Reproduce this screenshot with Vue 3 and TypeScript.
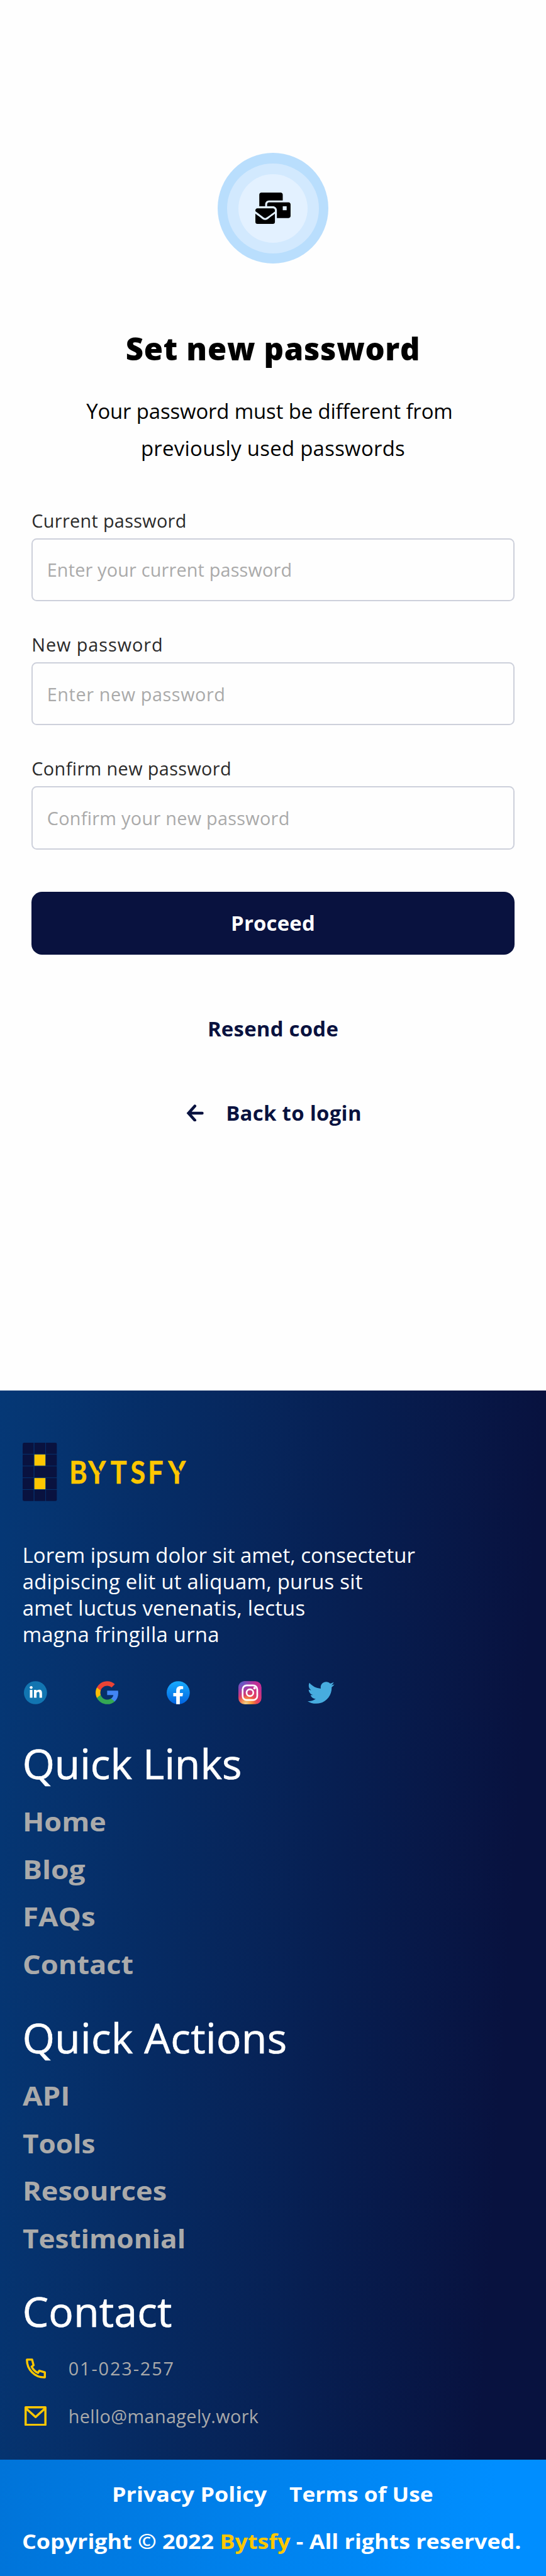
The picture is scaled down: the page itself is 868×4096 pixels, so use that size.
<script setup lang="ts">
interface Field {
  id: string
  label: string
  placeholder: string
  labelTracking: number
  hintTracking: number
}

interface FooterLink {
  text: string
  stretch: number
}

interface LinkGroup {
  title: string
  tracking: number
  links: FooterLink[]
}

const fields: Field[] = [
  { id: 'current', label: 'Current password', placeholder: 'Enter your current password', labelTracking: 0.33, hintTracking: 0.18 },
  { id: 'new', label: 'New password', placeholder: 'Enter new password', labelTracking: 0.95, hintTracking: 0.6 },
  { id: 'confirm', label: 'Confirm new password', placeholder: 'Confirm your new password', labelTracking: 0.4, hintTracking: 0.3 },
]

const groups: LinkGroup[] = [
  {
    title: 'Quick Links',
    tracking: 0.04,
    links: [
      { text: 'Home', stretch: 1.1 },
      { text: 'Blog', stretch: 1.13 },
      { text: 'FAQs', stretch: 1.12 },
      { text: 'Contact', stretch: 1.107 },
    ],
  },
  {
    title: 'Quick Actions',
    tracking: 0.4,
    links: [
      { text: 'API', stretch: 1.12 },
      { text: 'Tools', stretch: 1.08 },
      { text: 'Resources', stretch: 1.105 },
      { text: 'Testimonial', stretch: 1.08 },
    ],
  },
]

// Logo mark: 3 columns by 5 rows, the centre of rows 2 and 4 lit
const cells = [
  { x: 0, y: 0, w: 25 }, { x: 26.7, y: 0, w: 25 }, { x: 53, y: 0, w: 25 },
  { x: 0, y: 26.8, w: 25 }, { x: 26.7, y: 26.8, w: 25, lit: true }, { x: 53, y: 26.8, w: 25 },
  { x: 0, y: 53.6, w: 25 }, { x: 26.7, y: 53.6, w: 51.3 },
  { x: 0, y: 80.4, w: 25 }, { x: 26.7, y: 80.4, w: 25, lit: true }, { x: 53, y: 80.4, w: 25 },
  { x: 0, y: 107.2, w: 25 }, { x: 26.7, y: 107.2, w: 25 }, { x: 53, y: 107.2, w: 25 },
]
</script>

<template>
  <div class="page">
    <main class="reset">
      <div class="badge">
        <div class="badge-mid">
          <div class="badge-core">
            <svg class="mail-icon" viewBox="0 0 576 512" aria-hidden="true">
              <path d="M160 448c-25.6 0-51.2-22.4-64-32-64-44.8-83.2-60.8-96-70.4V480c0 17.67 14.33 32 32 32h256c17.67 0 32-14.33 32-32V345.6c-12.8 9.6-32 25.6-96 70.4-12.8 9.6-38.4 32-64 32zm128-192H32c-17.67 0-32 14.33-32 32v16c25.6 19.2 22.4 19.2 115.2 86.4 9.6 6.4 28.8 25.6 44.8 25.6s35.2-19.2 44.8-22.4c92.8-67.2 89.6-67.2 115.2-86.4V288c0-17.67-14.33-32-32-32zm256-96H224c-17.67 0-32 14.33-32 32v32h96c33.21 0 60.59 25.42 63.71 57.82l.29-.22V416h192c17.67 0 32-14.33 32-32V192c0-17.67-14.33-32-32-32zm-32 128h-64v-64h64v64zm-352-96c0-35.29 28.71-64 64-64h224V32c0-17.67-14.33-32-32-32H96C78.33 0 64 14.33 64 32v192h96v-32z" />
            </svg>
          </div>
        </div>
      </div>

      <h1 class="title">Set new password</h1>
      <p class="lead">
        <span class="lead-first">Your password must be different from</span>
        <span class="lead-second">previously used passwords</span>
      </p>

      <form class="form" @submit.prevent>
        <div v-for="f in fields" :key="f.id" class="field">
          <label class="label" :for="f.id" :style="{ letterSpacing: f.labelTracking + 'px' }">{{ f.label }}</label>
          <input :id="f.id" class="input" type="text" :placeholder="f.placeholder" :style="{ letterSpacing: f.hintTracking + 'px' }" />
        </div>
        <button class="proceed" type="submit">Proceed</button>
      </form>

      <a class="resend">Resend code</a>
      <a class="back">
        <svg class="arrow" viewBox="42 50 120 122" aria-hidden="true">
          <path d="M62 111H152M101 62L57 111L101 160" fill="none" stroke="#09123f" stroke-width="20" stroke-linecap="round" />
        </svg>
        <span>Back to login</span>
      </a>
    </main>

    <footer class="footer">
      <svg class="logo" viewBox="0 0 380 133" role="img" aria-label="Bytsfy">
        <clipPath id="mark"><rect width="78" height="133" rx="3.5" /></clipPath>
        <g clip-path="url(#mark)">
          <rect v-for="(c, i) in cells" :key="i" :x="c.x" :y="c.y" :width="c.w" height="25.4" :fill="c.lit ? '#ffc700' : '#09123f'" />
        </g>
        <text class="wordmark" y="93.7" x="120.6 169.3 227 278.7 324 376" transform="scale(0.88 1)">BYTSFY</text>
        <path d="M163.5 42L176.5 68M345.500 42L358.500 68" stroke="#06306a" stroke-width="4.6" />
      </svg>

      <p class="about">
        Lorem ipsum dolor sit amet, consectetur<br />
        <span class="about-rest">adipiscing elit ut aliquam, purus sit<br />amet luctus venenatis, lectus<br />magna fringilla urna</span>
      </p>

      <div class="socials">
        <svg class="social" viewBox="2 2 28 28" aria-label="LinkedIn">
          <circle cx="16" cy="16" r="14" fill="#1275b1" />
          <path fill="#fff" d="M12.6186 9.69215C12.6186 10.6267 11.8085 11.3843 10.8093 11.3843C9.81004 11.3843 9 10.6267 9 9.69215C9 8.7576 9.81004 8 10.8093 8C11.8085 8 12.6186 8.7576 12.6186 9.69215ZM9.24742 12.6281H12.3402V22H9.24742V12.6281ZM17.3196 12.6281H14.2268V22H17.3196V17.2049C17.3196 16.0976 17.6977 14.9855 19.2062 14.9855C20.911 14.9855 20.9008 16.4345 20.8928 17.5571C20.8824 19.0244 20.9072 20.5219 20.9072 22H24V17.0538C23.9738 13.8954 23.1508 12.4401 20.4433 12.4401C18.8354 12.4401 17.8387 13.1701 17.3196 13.8305V12.6281Z" />
        </svg>
        <svg class="social" viewBox="1 1 22 22" aria-label="Google">
          <path fill="#4285f4" d="M22.56 12.25c0-.78-.07-1.53-.2-2.25H12v4.26h5.92c-.26 1.37-1.04 2.53-2.21 3.31v2.77h3.57c2.08-1.92 3.28-4.74 3.28-8.09z" />
          <path fill="#34a853" d="M12 23c2.97 0 5.46-.98 7.28-2.66l-3.57-2.77c-.98.66-2.23 1.06-3.71 1.06-2.86 0-5.29-1.93-6.16-4.53H2.18v2.84C3.99 20.53 7.7 23 12 23z" />
          <path fill="#fbbc05" d="M5.84 14.09c-.22-.66-.35-1.36-.35-2.09s.13-1.43.35-2.09V7.07H2.18C1.43 8.55 1 10.22 1 12s.43 3.45 1.18 4.93l2.85-2.22.81-.62z" />
          <path fill="#ea4335" d="M12 5.38c1.62 0 3.06.56 4.21 1.64l3.15-3.15C17.45 2.09 14.97 1 12 1 7.7 1 3.99 3.47 2.18 7.07l3.66 2.84c.87-2.6 3.3-4.53 6.16-4.53z" />
        </svg>
        <svg class="social" viewBox="2 2 28 28" aria-label="Facebook">
          <linearGradient id="fb" x1="0" y1="0" x2="0" y2="1">
            <stop offset="0" stop-color="#18acfe" />
            <stop offset="1" stop-color="#0163e0" />
          </linearGradient>
          <circle cx="16" cy="16" r="14" fill="url(#fb)" />
          <path fill="#fff" d="M21.2137 20.2816L21.8356 16.3301H17.9452V13.767C17.9452 12.6857 18.4877 11.6311 20.2302 11.6311H22V8.26699C22 8.26699 20.3945 8 18.8603 8C15.6548 8 13.5617 9.89294 13.5617 13.3184V16.3301H10V20.2816H13.5617V29.8345C14.2767 29.944 15.0082 30 15.7534 30C16.4986 30 17.2302 29.944 17.9452 29.8345V20.2816H21.2137Z" />
        </svg>
        <svg class="social" viewBox="0 0 28 28" aria-label="Instagram">
          <radialGradient id="ig-pink" cx="0.43" cy="1" r="1">
            <stop offset="0.1" stop-color="#fa8f21" />
            <stop offset="0.42" stop-color="#e5405f" />
            <stop offset="0.8" stop-color="#c32f93" />
          </radialGradient>
          <radialGradient id="ig-glow" cx="0.32" cy="1" r="0.42">
            <stop offset="0" stop-color="#e8dca0" />
            <stop offset="1" stop-color="#ff9a2e" stop-opacity="0" />
          </radialGradient>
          <radialGradient id="ig-blue" cx="0.08" cy="-0.02" r="0.75">
            <stop offset="0" stop-color="#4168c9" />
            <stop offset="0.4" stop-color="#7c4fc0" stop-opacity="0.85" />
            <stop offset="1" stop-color="#a03bb0" stop-opacity="0" />
          </radialGradient>
          <rect width="28" height="28" rx="7.5" fill="url(#ig-pink)" />
          <rect width="28" height="28" rx="7.5" fill="url(#ig-glow)" />
          <rect width="28" height="28" rx="7.5" fill="url(#ig-blue)" />
          <rect x="5.1" y="5.1" width="17.8" height="17.8" rx="5" fill="none" stroke="#fff" stroke-width="2" />
          <circle cx="14" cy="14" r="4.1" fill="none" stroke="#fff" stroke-width="2" />
          <circle cx="19.6" cy="8.5" r="1.5" fill="#fff" />
        </svg>
        <svg class="social bird" viewBox="0 48 512 416" aria-label="Twitter">
          <path fill="#47acdf" d="M459.37 151.716c.325 4.548.325 9.097.325 13.645 0 138.72-105.583 298.558-298.558 298.558-59.452 0-114.68-17.219-161.137-47.106 8.447.974 16.568 1.299 25.34 1.299 49.055 0 94.213-16.568 130.274-44.832-46.132-.975-84.792-31.188-98.112-72.772 6.498.974 12.995 1.624 19.818 1.624 9.421 0 18.843-1.3 27.614-3.573-48.081-9.747-84.143-51.98-84.143-102.985v-1.299c13.969 7.797 30.214 12.67 47.431 13.319-28.264-18.843-46.781-51.005-46.781-87.391 0-19.492 5.197-37.36 14.294-52.954 51.655 63.675 129.3 105.258 216.365 109.807-1.624-7.797-2.599-15.918-2.599-24.04 0-57.828 46.782-104.934 104.934-104.934 30.213 0 57.502 12.67 76.67 33.137 23.715-4.548 46.456-13.32 66.599-25.34-7.798 24.366-24.366 44.833-46.132 57.827 21.117-2.273 41.584-8.122 60.426-16.243-14.292 20.791-32.161 39.308-52.628 54.253z" />
        </svg>
      </div>

      <section v-for="g in groups" :key="g.title" class="group">
        <h2 class="group-title" :style="{ letterSpacing: g.tracking + 'px' }">{{ g.title }}</h2>
        <ul class="links">
          <li v-for="l in g.links" :key="l.text">
            <a class="link" :style="{ transform: `scaleX(${l.stretch})` }">{{ l.text }}</a>
          </li>
        </ul>
      </section>

      <section class="group">
        <h2 class="group-title contact-title">Contact</h2>
        <div class="contacts">
          <div class="contact">
            <span class="contact-icon">
              <svg class="phone" viewBox="84 71 138 137" aria-hidden="true">
                <path d="M92 79H127L137 118L124 127Q138 157 167 170L176 155L214 166V200C146 203 90 146 92 79Z" fill="none" stroke="#ffc700" stroke-width="14.5" stroke-linejoin="round" />
              </svg>
            </span>
            <span class="phone-text">01-023-257</span>
          </div>
          <div class="contact">
            <span class="contact-icon">
              <svg class="envelope" viewBox="78 396 150 135" aria-hidden="true">
                <path d="M85.5 403.5H220.5V523.5H85.5ZM88 411L153.500 470L218 411" fill="none" stroke="#ffc700" stroke-width="15" stroke-linejoin="round" />
              </svg>
            </span>
            <span class="email-text">hello@managely.work</span>
          </div>
        </div>
      </section>
    </footer>

    <div class="legal">
      <div class="legal-links">
        <a class="privacy">Privacy Policy</a>
        <a class="terms">Terms of Use</a>
      </div>
      <p class="copyright">Copyright © 2022 <span class="brand">Bytsfy</span> - All rights reserved.</p>
    </div>
  </div>
</template>

<style>
html {
  font-size: 69.91px;
  background: #fff;
}
</style>

<style scoped>
.page {
  width: 100%;
  height: 4096px;
  display: flex;
  flex-direction: column;
  overflow: hidden;
  font-family: "Open Sans", "Noto Sans", sans-serif;
  font-size: 0.471rem;
  color: #000;
}

.reset {
  box-sizing: border-box;
  height: 31.63rem;
  flex: none;
  padding: 3.48rem 0.72rem 0;
  display: flex;
  flex-direction: column;
  align-items: center;
  background: #fefefe;
}

.badge,
.badge-mid,
.badge-core {
  display: flex;
  flex: none;
  align-items: center;
  justify-content: center;
  border-radius: 50%;
}

.badge {
  width: 2.52rem;
  height: 2.52rem;
  background: #b9defd;
}

.badge-mid {
  width: 2.1rem;
  height: 2.04rem;
  background: #d2e9fe;
}

.badge-core {
  width: 1.56rem;
  height: 1.56rem;
  background: #e3f1ff;
}

.mail-icon {
  width: 0.8rem;
  height: 0.72rem;
}

.title {
  margin: 1.433rem 0 0;
  font-size: 0.701rem;
  font-weight: 800;
  line-height: 1rem;
  letter-spacing: 0.7px;
}

.lead {
  margin: 0.514rem 0 0;
  line-height: 0.84rem;
  text-align: center;
}

.lead-first,
.lead-second {
  display: block;
}

.lead-first {
  margin-right: 0.16rem;
  letter-spacing: -0.14px;
}

.lead-second {
  letter-spacing: 0.28px;
}

.form {
  width: 100%;
  margin-top: 0.938rem;
  display: flex;
  flex-direction: column;
}

.field {
  display: flex;
  flex-direction: column;
  gap: 0.125rem;
  margin-bottom: 0.705rem;
}

.label {
  padding-top: 0.01rem;
  font-size: 0.412rem;
  line-height: 0.54rem;
  color: #2a2a2a;
}

.input {
  box-sizing: border-box;
  width: 100%;
  height: 1.44rem;
  padding: 0 0.32rem;
  border: 2px solid #cdd0db;
  border-radius: 0.12rem;
  outline: none;
  background: transparent;
  font: inherit;
  font-size: 0.412rem;
  color: #2a2a2a;
}

.input::placeholder {
  color: #aaa;
  opacity: 1;
}

.proceed {
  height: 1.44rem;
  margin-top: 0.255rem;
  border: 0;
  border-radius: 0.24rem;
  background: #09123f;
  color: #fff;
  font: inherit;
  font-weight: 700;
  letter-spacing: 0.17px;
}

.resend,
.back {
  line-height: 0.6rem;
  font-weight: 700;
  color: #09123f;
}

.resend {
  margin-top: 1.377rem;
  letter-spacing: 0.24px;
}

.back {
  margin-top: 1.317rem;
  margin-left: 0.04rem;
  display: flex;
  align-items: center;
  gap: 0.505rem;
  letter-spacing: 0.3px;
}

.arrow {
  width: 0.4rem;
  height: 0.4rem;
}

.footer {
  box-sizing: border-box;
  height: 24.31rem;
  flex: none;
  padding: 1.18rem 0.51rem 0;
  display: flex;
  flex-direction: column;
  background: linear-gradient(93.5deg, #053876 0%, #08123f 89%);
  color: #fff;
}

.logo {
  width: 3.8rem;
  height: 1.33rem;
  flex: none;
}

.wordmark {
  font-family: Lato, sans-serif;
  font-weight: 700;
  font-size: 70px;
  fill: #ffc700;
  stroke: #ffc700;
  stroke-width: 0.8;
}

.about {
  margin: 0.937rem 0 0;
  line-height: 0.6rem;
  letter-spacing: 0.04px;
  white-space: nowrap;
}

.about-rest {
  letter-spacing: 0.24px;
}

.socials {
  margin: 0.763rem 0 0 0.037rem;
  display: flex;
  gap: 1.1rem;
}

.social {
  width: 0.525rem;
  height: 0.53rem;
  flex: none;
}

.bird {
  width: 0.61rem;
  margin-left: -0.045rem;
}

.socials + .group {
  margin-top: 0.735rem;
}

.group {
  margin-top: 0.52rem;
}

.group-title {
  margin: 0;
  font-size: 0.941rem;
  font-weight: 500;
  line-height: 1.2rem;
  -webkit-text-stroke: 0.7px #fff;
}

.contact-title {
  letter-spacing: 0.26px;
}

.links {
  margin: 0.195rem 0 0;
  padding: 0;
  list-style: none;
  font-size: 0.584rem;
  font-weight: 700;
  line-height: 1.08rem;
  color: #aaa;
}

.links li {
  height: 1.08rem;
}

.link,
.privacy,
.terms,
.copyright {
  display: inline-block;
  transform-origin: left center;
  white-space: nowrap;
}

.contacts {
  margin-top: 0.155rem;
  font-size: 0.412rem;
  line-height: 1.08rem;
  color: #aaa;
}

.contact {
  height: 1.08rem;
  display: flex;
  align-items: center;
}

.contact-icon {
  width: 1.045rem;
  display: flex;
  align-items: center;
}

.phone {
  width: 0.46rem;
  height: 0.457rem;
  margin-left: 0.07rem;
}

.envelope {
  width: 0.5rem;
  height: 0.45rem;
  margin-left: 0.05rem;
}

.phone-text {
  letter-spacing: 1.9px;
}

.email-text {
  letter-spacing: 0.38px;
}

.legal {
  box-sizing: border-box;
  flex: 1;
  padding: 0.24rem 0 0 0.5rem;
  background: linear-gradient(93.5deg, #0074d9 0%, #008eff 90%);
  color: #fff;
  font-size: 0.468rem;
  font-weight: 700;
  line-height: 1.08rem;
}

.legal-links {
  height: 1.08rem;
  display: flex;
  padding-left: 2.05rem;
}

.privacy {
  width: 4.035rem;
  transform: scaleX(1.1);
}

.terms {
  transform: scaleX(1.08);
}

.copyright {
  margin: 0;
  transform: scaleX(1.096);
}

.brand {
  color: #ffc700;
}
</style>
